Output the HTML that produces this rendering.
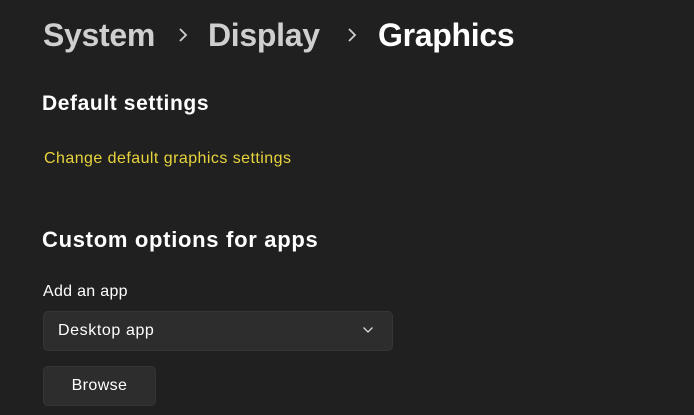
<!DOCTYPE html>
<html><head><meta charset="utf-8"><style>
html,body{margin:0;padding:0;background:#202020;width:694px;height:415px;overflow:hidden;font-family:"Liberation Sans",sans-serif;}
.t{position:absolute;white-space:nowrap;}
.h1{font-size:32px;font-weight:bold;top:17px;letter-spacing:-0.3px;}
.chev{position:absolute;top:27px;}
.box{position:absolute;background:#2d2d2d;border:1px solid #353535;border-radius:5px;box-sizing:border-box;}
</style></head><body>
<div class="t h1" style="left:43px;color:#cfcfcf;">System</div>
<svg class="chev" style="left:177px" width="12" height="16" viewBox="0 0 12 16"><path d="M3 2l6 6-6 6" stroke="#cfcfcf" stroke-width="1.8" fill="none"/></svg>
<div class="t h1" style="left:208px;color:#cfcfcf;">Display</div>
<svg class="chev" style="left:346px" width="12" height="16" viewBox="0 0 12 16"><path d="M3 2l6 6-6 6" stroke="#cfcfcf" stroke-width="1.8" fill="none"/></svg>
<div class="t h1" style="left:378px;color:#fff;">Graphics</div>
<div class="t" style="left:42px;top:92px;font-size:21px;font-weight:bold;color:#fff;letter-spacing:0.6px;">Default settings</div>
<div class="t" style="left:44px;top:150px;font-size:16px;color:#e8d43c;letter-spacing:0.45px;">Change default graphics settings</div>
<div class="t" style="left:42px;top:227px;font-size:22px;font-weight:bold;color:#fff;letter-spacing:0.7px;">Custom options for apps</div>
<div class="t" style="left:43px;top:283px;font-size:16px;color:#fff;letter-spacing:0.3px;">Add an app</div>
<div class="box" style="left:43px;top:311px;width:350px;height:40px;"></div>
<div class="t" style="left:58px;top:322px;font-size:16px;color:#fff;letter-spacing:0.6px;">Desktop app</div>
<svg style="position:absolute;left:362px;top:326px" width="12" height="8" viewBox="0 0 12 8"><path d="M1.5 1.5l4.5 4.5 4.5-4.5" stroke="#dcdcdc" stroke-width="1.3" fill="none"/></svg>
<div class="box" style="left:43px;top:366px;width:113px;height:40px;"></div>
<div class="t" style="left:43px;top:377px;width:113px;text-align:center;font-size:16px;color:#fff;letter-spacing:0.4px;">Browse</div>
</body></html>
